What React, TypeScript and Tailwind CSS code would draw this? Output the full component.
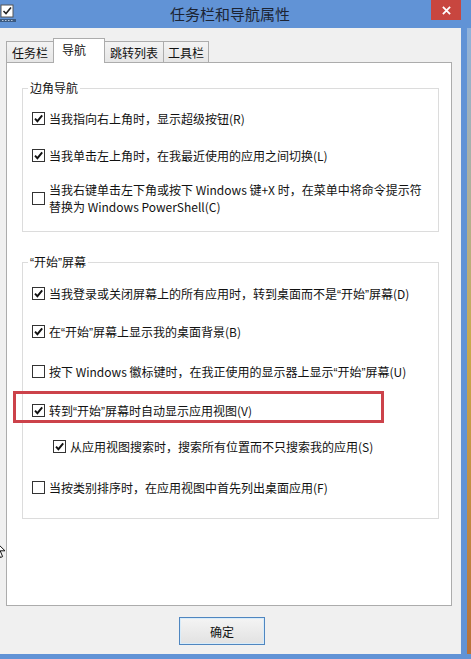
import type { ReactNode } from "react";
import clsx from "clsx";

function Box({ checked }: { checked: boolean }) {
  return (
    <span className="flex h-[13px] w-[13px] shrink-0 items-center justify-center border border-[#333333] bg-white">
      {checked && (
        <svg viewBox="0 0 11 11" className="h-[11px] w-[11px]">
          <path d="M2 5.6 L4.4 8.2 L9.2 2.4" fill="none" stroke="#111111" strokeWidth="1.9" />
        </svg>
      )}
    </span>
  );
}

// narrow curly quotes, like the dialog font draws them
function Q({ children }: { children: ReactNode }) {
  return (
    <>
      <span className="font-['Liberation_Sans',sans-serif] leading-[8px]">“</span>
      {children}
      <span className="font-['Liberation_Sans',sans-serif] leading-[8px]">”</span>
    </>
  );
}

function Option({
  checked,
  children,
  className,
}: {
  checked: boolean;
  children: ReactNode;
  className?: string;
}) {
  return (
    <div className={clsx("flex items-center gap-[4px] leading-[17px]", className)}>
      <Box checked={checked} />
      <span className="whitespace-nowrap">{children}</span>
    </div>
  );
}

const tabs = [
  { label: "任务栏", w: "w-[48px]", active: false },
  { label: "导航", w: "w-[52px]", active: true },
  { label: "跳转列表", w: "w-[60px]", active: false },
  { label: "工具栏", w: "w-[46px]", active: false },
];

export default function App() {
  return (
    <div className="relative flex h-[659px] w-[471px] flex-col overflow-hidden bg-[#6193d6] font-['Noto_Sans_CJK_SC',sans-serif] text-[12px] text-[#111111]">
      {/* title bar */}
      <div className="flex h-[28px] shrink-0 items-center">
        <svg viewBox="0 0 16 20" className="mt-[4px] h-[20px] w-[16px] self-start">
          <rect x="1" y="1" width="12" height="12" fill="#ffffff" stroke="#555" strokeWidth="1" />
          <path d="M3.5 7 L6 9.5 L11 3.5" fill="none" stroke="#222" strokeWidth="1.6" />
          <rect x="0" y="15" width="16" height="3" fill="#3c5a80" />
          <path d="M2 16.5 H14" stroke="#b8c8dc" strokeWidth="1" strokeDasharray="1.5 1.5" />
        </svg>
        <span className="ml-[154px] text-[15px] leading-[20px] text-[#1c2433]">任务栏和导航属性</span>
        <div className="ml-auto mr-[10px] flex h-[20px] w-[30px] items-center justify-center self-start bg-[#c8463f]">
          <svg viewBox="0 0 10 10" className="h-[9px] w-[9px]">
            <path d="M1 1 L9 9 M9 1 L1 9" stroke="#ffffff" strokeWidth="2" />
          </svg>
        </div>
      </div>

      <div className="flex">
        {/* dialog body */}
        <div className="flex h-[626px] w-[461px] flex-col bg-[#f0f0f0] pl-[6px] pt-[10px]">
          <div className="relative z-10 flex h-[24px] items-end">
            {tabs.map((t, i) =>
              t.active ? (
                <div
                  key={t.label}
                  className={clsx(
                    "-mb-px flex h-[25px] items-start border border-b-0 border-[#acacac] bg-white pl-[8px] pt-[2px] leading-[17px]",
                    t.w,
                    i > 0 && "-ml-px"
                  )}
                >
                  {t.label}
                </div>
              ) : (
                <div
                  key={t.label}
                  className={clsx(
                    "flex h-[21px] items-center justify-center border border-b-0 border-[#acacac] bg-gradient-to-b from-[#f3f3f3] to-[#e6e6e6] leading-[17px]",
                    t.w,
                    i > 0 && "-ml-px"
                  )}
                >
                  {t.label}
                </div>
              )
            )}
          </div>

          <div className="h-[544px] w-[446px] border border-[#acacac] bg-white">
            <fieldset className="ml-[15px] mt-[17px] w-[417px] border border-[#dcdcdc] pb-[16px] pl-[9px]">
              <legend className="-ml-[4px] px-[2px] leading-[16px]">边角导航</legend>
              <Option checked className="mt-[14px]">
                当我指向右上角时，显示超级按钮(R)
              </Option>
              <Option checked className="mt-[20px]">
                当我单击左上角时，在我最近使用的应用之间切换(L)
              </Option>
              <Option checked={false} className="mt-[17px]">
                当我右键单击左下角或按下 Windows 键+X 时，在菜单中将命令提示符
                <br />
                替换为 Windows PowerShell(C)
              </Option>
            </fieldset>

            <fieldset className="ml-[15px] mt-[22px] w-[417px] border border-[#dcdcdc] pb-[22px] pl-[9px]">
              <legend className="-ml-[4px] h-[16px] px-[2px] leading-[16px]">
                <Q>开始</Q>屏幕
              </legend>
              <Option checked className="mt-[15px]">
                当我登录或关闭屏幕上的所有应用时，转到桌面而不是<Q>开始</Q>屏幕(D)
              </Option>
              <Option checked className="mt-[21px]">
                在<Q>开始</Q>屏幕上显示我的桌面背景(B)
              </Option>
              <Option checked={false} className="mt-[23px]">
                按下 Windows 徽标键时，在我正使用的显示器上显示<Q>开始</Q>屏幕(U)
              </Option>
              <Option checked className="mt-[22px]">
                转到<Q>开始</Q>屏幕时自动显示应用视图(V)
              </Option>
              <Option checked className="ml-[21px] mt-[19px]">
                从应用视图搜索时，搜索所有位置而不只搜索我的应用(S)
              </Option>
              <Option checked={false} className="mt-[24px]">
                当按类别排序时，在应用视图中首先列出桌面应用(F)
              </Option>
            </fieldset>
          </div>

          <button className="ml-[173px] mt-[11px] flex h-[28px] w-[86px] items-center justify-center border border-[#4f86c0] bg-gradient-to-b from-[#f4f4f4] to-[#e2e2e2] leading-[17px] shadow-[inset_0_0_0_1px_#d8ecfa]">
            确定
          </button>
        </div>

        {/* window frame edge */}
        <div className="w-[6px] bg-[#6193d6]" />
        <div className="w-[4px] bg-gradient-to-b from-[#8fb2dc] via-[#c9aa4c] to-[#b8713a]" />
      </div>

      {/* red highlight drawn over the option */}
      <div className="absolute left-[13px] top-[391px] h-[32px] w-[371px] border-[3px] border-[#cc424a]" />

      {/* mouse pointer at the left edge */}
      <svg viewBox="0 0 12 19" className="absolute left-[-6px] top-[540px] h-[19px] w-[12px]">
        <path d="M0.5 0.5 L0.5 15 L4 11.6 L6.4 17.5 L8.6 16.6 L6.2 10.8 L11 10.8 Z" fill="#ffffff" stroke="#111" strokeWidth="1" />
      </svg>
    </div>
  );
}
